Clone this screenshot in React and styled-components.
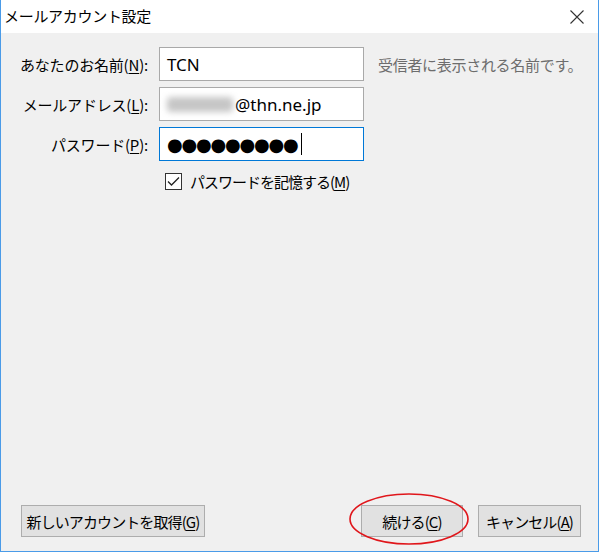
import React from 'react';
import styled, { createGlobalStyle } from 'styled-components';

const Global = createGlobalStyle`
  html, body {
    margin: 0;
    padding: 0;
    background: #ffffff;
  }
  body {
    font-family: "Noto Sans CJK JP", "Noto Sans", sans-serif;
  }
`;

const Window = styled.div`
  width: 599px;
  height: 552px;
  box-sizing: border-box;
  border: 1px solid #4a9be8;
  border-top: none;
  display: flex;
  flex-direction: column;
  background: #f0f0f0;
`;

const TitleBar = styled.div`
  height: 33px;
  flex: none;
  background: #ffffff;
  display: flex;
  align-items: center;
  justify-content: space-between;
  padding: 0 14px 0 3px;
`;

const Title = styled.div`
  font-size: 15px;
  color: #000;
  letter-spacing: -0.3px;
  margin-top: -2px;
`;

const Body = styled.div`
  flex: 1;
  display: flex;
  flex-direction: column;
  padding: 14px 17px 14px 19px;
`;

const Form = styled.div`
  display: grid;
  grid-template-columns: 128px 205px 1fr;
  column-gap: 11px;
  row-gap: 6px;
  align-items: center;
`;

const Label = styled.label`
  font-size: 15px;
  color: #000;
  text-align: right;
  white-space: nowrap;
  letter-spacing: -0.2px;

  u {
    text-decoration-thickness: 1px;
    text-underline-offset: 2px;
  }
`;

const Field = styled.div`
  height: 34px;
  box-sizing: border-box;
  background: #fff;
  border: 1px solid ${p => (p.$focused ? '#0078d7' : '#a9a9a9')};
  display: flex;
  align-items: center;
  padding: 0 7px;
  font-family: "Noto Sans", "Noto Sans CJK JP", sans-serif;
  font-size: 17px;
  color: #000;
  white-space: nowrap;
  overflow: hidden;
`;

const Blurred = styled.span`
  display: inline-block;
  width: 66px;
  height: 15px;
  margin-right: 2px;
  background: #c6c6c6;
  filter: blur(3px);
  border-radius: 4px;
`;

const Dots = styled.span`
  font-size: 18px;
  letter-spacing: -1.2px;
  font-family: "DejaVu Sans", sans-serif;
`;

const Caret = styled.span`
  display: inline-block;
  width: 1px;
  height: 22px;
  background: #000;
  margin-left: 3px;
`;

const Hint = styled.div`
  font-size: 15px;
  color: #6d6d6d;
  white-space: nowrap;
  padding-left: 3px;
  letter-spacing: -0.3px;
`;

const CheckRow = styled.label`
  grid-column: 2 / 4;
  display: flex;
  align-items: center;
  gap: 8px;
  margin-top: 4px;
  padding-left: 6px;
  font-size: 15px;
  color: #000;
  letter-spacing: -1px;

  u {
    text-underline-offset: 2px;
  }
`;

const Box = styled.span`
  width: 17px;
  height: 17px;
  box-sizing: border-box;
  border: 1px solid #333;
  background: #fff;
  display: flex;
  align-items: center;
  justify-content: center;
`;

const Spacer = styled.div`
  flex: 1;
`;

const Footer = styled.div`
  display: flex;
  align-items: center;
  padding-left: 1px;
`;

const Button = styled.button`
  height: 32px;
  box-sizing: border-box;
  width: ${p => p.$w}px;
  padding: 0;
  background: #e1e1e1;
  border: 1px solid #adadad;
  font-family: "Noto Sans CJK JP", "Noto Sans", sans-serif;
  font-size: 15px;
  color: #000;
  letter-spacing: -0.9px;
  white-space: nowrap;
  margin-left: ${p => p.$gap || 0}px;

  u {
    text-underline-offset: 2px;
  }
`;

const Highlight = styled.div`
  position: relative;
  margin-left: auto;
`;

const Ring = styled.svg`
  position: absolute;
  left: -13px;
  top: -13px;
  pointer-events: none;
`;

function CloseIcon() {
  return (
    <svg width="14" height="14" viewBox="0 0 14 14">
      <path d="M0.5 0.5 L13.5 13.5 M13.5 0.5 L0.5 13.5" stroke="#333" strokeWidth="1.1" fill="none" />
    </svg>
  );
}

export default function App() {
  return (
    <>
      <Global />
      <Window>
        <TitleBar>
          <Title>メールアカウント設定</Title>
          <CloseIcon />
        </TitleBar>
        <Body>
          <Form>
            <Label>あなたのお名前(<u>N</u>):</Label>
            <Field>TCN</Field>
            <Hint>受信者に表示される名前です。</Hint>

            <Label>メールアドレス(<u>L</u>):</Label>
            <Field>
              <Blurred />@thn.ne.jp
            </Field>
            <span />

            <Label>パスワード(<u>P</u>):</Label>
            <Field $focused>
              <Dots>●●●●●●●●●</Dots>
              <Caret />
            </Field>
            <span />

            <CheckRow>
              <Box>
                <svg width="13" height="11" viewBox="0 0 13 11">
                  <path d="M1 5.5 L4.5 9 L12 1.5" stroke="#222" strokeWidth="1.3" fill="none" />
                </svg>
              </Box>
              <span>パスワードを記憶する(<u>M</u>)</span>
            </CheckRow>
          </Form>
          <Spacer />
          <Footer>
            <Button $w={184}>新しいアカウントを取得(<u>G</u>)</Button>
            <Highlight>
              <Button $w={102}>続ける(<u>C</u>)</Button>
              <Ring width="122" height="54" viewBox="0 0 122 54">
                <ellipse cx="61" cy="27" rx="59" ry="25" stroke="#e0161b" strokeWidth="1.6" fill="none" />
              </Ring>
            </Highlight>
            <Button $w={103} $gap={15}>キャンセル(<u>A</u>)</Button>
          </Footer>
        </Body>
      </Window>
    </>
  );
}
